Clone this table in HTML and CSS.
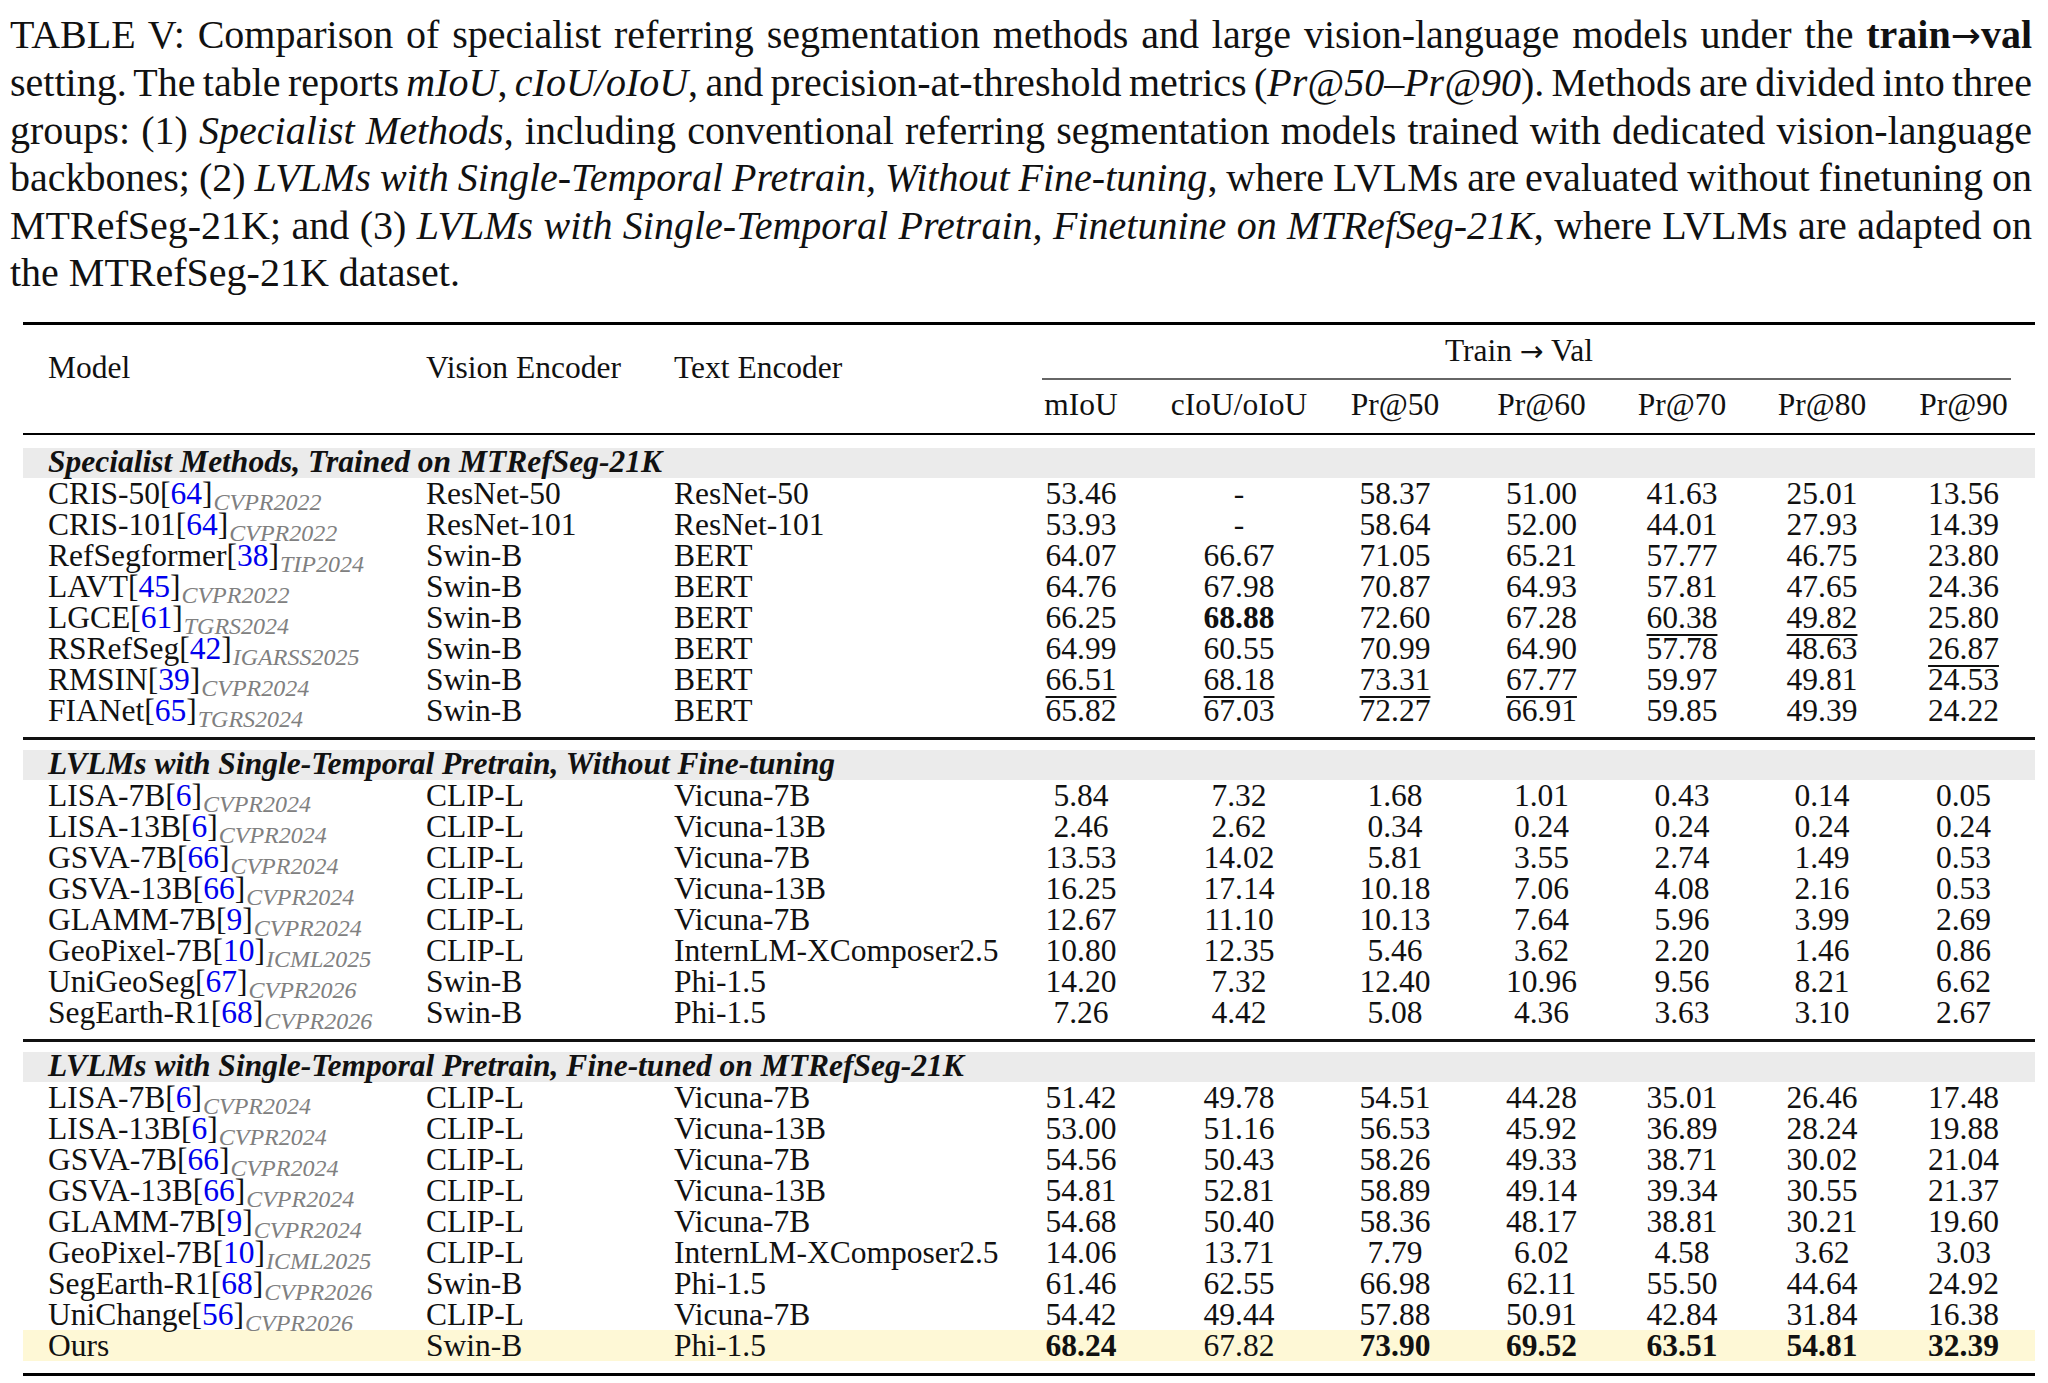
FILE: index.html
```html
<!DOCTYPE html>
<html lang="en">
<head>
  <meta charset="UTF-8">
  <title>Table V - Train to Val comparison</title>
  <link rel="stylesheet" href="styles.css">
</head>
<body>

  <!-- Caption -->
  <div class="caption">
    <span class="ln">TABLE V: Comparison of specialist referring segmentation methods and large vision-language models under the <b>train<span class="arr">&rarr;</span>val</b></span>
    <span class="ln">setting. The table reports <i>mIoU</i>, <i>cIoU/oIoU</i>, and precision-at-threshold metrics (<i>Pr@50&ndash;Pr@90</i>). Methods are divided into three</span>
    <span class="ln">groups: (1) <i>Specialist Methods</i>, including conventional referring segmentation models trained with dedicated vision-language</span>
    <span class="ln">backbones; (2) <i>LVLMs with Single-Temporal Pretrain, Without Fine-tuning</i>, where LVLMs are evaluated without finetuning on</span>
    <span class="ln">MTRefSeg-21K; and (3) <i>LVLMs with Single-Temporal Pretrain, Finetunine on MTRefSeg-21K</i>, where LVLMs are adapted on</span>
    <span class="ln last">the MTRefSeg-21K dataset.</span>
  </div>

  <div class="results">
    <div class="rule-top"></div>

    <!-- Header -->
    <div class="head">
      <div class="h-left">Model</div>
      <div class="h-left h-vis">Vision Encoder</div>
      <div class="h-left h-txt">Text Encoder</div>
      <div class="h-group">Train <span class="arr">&rarr;</span> Val</div>
      <div class="cmid"></div>
      <div class="h-met">mIoU</div>
      <div class="h-met">cIoU/oIoU</div>
      <div class="h-met">Pr@50</div>
      <div class="h-met">Pr@60</div>
      <div class="h-met">Pr@70</div>
      <div class="h-met">Pr@80</div>
      <div class="h-met">Pr@90</div>
    </div>
    <div class="rule-mid"></div>

    <!-- Group 1 -->
    <div class="band">Specialist Methods, Trained on MTRefSeg-21K</div>
    <div class="row"><div>CRIS-50[<span class="ref">64</span>]<span class="venue">CVPR2022</span></div><div>ResNet-50</div><div>ResNet-50</div><div>53.46</div><div>-</div><div>58.37</div><div>51.00</div><div>41.63</div><div>25.01</div><div>13.56</div></div>
    <div class="row"><div>CRIS-101[<span class="ref">64</span>]<span class="venue">CVPR2022</span></div><div>ResNet-101</div><div>ResNet-101</div><div>53.93</div><div>-</div><div>58.64</div><div>52.00</div><div>44.01</div><div>27.93</div><div>14.39</div></div>
    <div class="row"><div>RefSegformer[<span class="ref">38</span>]<span class="venue">TIP2024</span></div><div>Swin-B</div><div>BERT</div><div>64.07</div><div>66.67</div><div>71.05</div><div>65.21</div><div>57.77</div><div>46.75</div><div>23.80</div></div>
    <div class="row"><div>LAVT[<span class="ref">45</span>]<span class="venue">CVPR2022</span></div><div>Swin-B</div><div>BERT</div><div>64.76</div><div>67.98</div><div>70.87</div><div>64.93</div><div>57.81</div><div>47.65</div><div>24.36</div></div>
    <div class="row"><div>LGCE[<span class="ref">61</span>]<span class="venue">TGRS2024</span></div><div>Swin-B</div><div>BERT</div><div>66.25</div><div><b>68.88</b></div><div>72.60</div><div>67.28</div><div><u>60.38</u></div><div><u>49.82</u></div><div>25.80</div></div>
    <div class="row"><div>RSRefSeg[<span class="ref">42</span>]<span class="venue">IGARSS2025</span></div><div>Swin-B</div><div>BERT</div><div>64.99</div><div>60.55</div><div>70.99</div><div>64.90</div><div>57.78</div><div>48.63</div><div><u>26.87</u></div></div>
    <div class="row"><div>RMSIN[<span class="ref">39</span>]<span class="venue">CVPR2024</span></div><div>Swin-B</div><div>BERT</div><div><u>66.51</u></div><div><u>68.18</u></div><div><u>73.31</u></div><div><u>67.77</u></div><div>59.97</div><div>49.81</div><div>24.53</div></div>
    <div class="row"><div>FIANet[<span class="ref">65</span>]<span class="venue">TGRS2024</span></div><div>Swin-B</div><div>BERT</div><div>65.82</div><div>67.03</div><div>72.27</div><div>66.91</div><div>59.85</div><div>49.39</div><div>24.22</div></div>
    <div class="rule-group"></div>

    <!-- Group 2 -->
    <div class="band">LVLMs with Single-Temporal Pretrain, Without Fine-tuning</div>
    <div class="row"><div>LISA-7B[<span class="ref">6</span>]<span class="venue">CVPR2024</span></div><div>CLIP-L</div><div>Vicuna-7B</div><div>5.84</div><div>7.32</div><div>1.68</div><div>1.01</div><div>0.43</div><div>0.14</div><div>0.05</div></div>
    <div class="row"><div>LISA-13B[<span class="ref">6</span>]<span class="venue">CVPR2024</span></div><div>CLIP-L</div><div>Vicuna-13B</div><div>2.46</div><div>2.62</div><div>0.34</div><div>0.24</div><div>0.24</div><div>0.24</div><div>0.24</div></div>
    <div class="row"><div>GSVA-7B[<span class="ref">66</span>]<span class="venue">CVPR2024</span></div><div>CLIP-L</div><div>Vicuna-7B</div><div>13.53</div><div>14.02</div><div>5.81</div><div>3.55</div><div>2.74</div><div>1.49</div><div>0.53</div></div>
    <div class="row"><div>GSVA-13B[<span class="ref">66</span>]<span class="venue">CVPR2024</span></div><div>CLIP-L</div><div>Vicuna-13B</div><div>16.25</div><div>17.14</div><div>10.18</div><div>7.06</div><div>4.08</div><div>2.16</div><div>0.53</div></div>
    <div class="row"><div>GLAMM-7B[<span class="ref">9</span>]<span class="venue">CVPR2024</span></div><div>CLIP-L</div><div>Vicuna-7B</div><div>12.67</div><div>11.10</div><div>10.13</div><div>7.64</div><div>5.96</div><div>3.99</div><div>2.69</div></div>
    <div class="row"><div>GeoPixel-7B[<span class="ref">10</span>]<span class="venue">ICML2025</span></div><div>CLIP-L</div><div>InternLM-XComposer2.5</div><div>10.80</div><div>12.35</div><div>5.46</div><div>3.62</div><div>2.20</div><div>1.46</div><div>0.86</div></div>
    <div class="row"><div>UniGeoSeg[<span class="ref">67</span>]<span class="venue">CVPR2026</span></div><div>Swin-B</div><div>Phi-1.5</div><div>14.20</div><div>7.32</div><div>12.40</div><div>10.96</div><div>9.56</div><div>8.21</div><div>6.62</div></div>
    <div class="row"><div>SegEarth-R1[<span class="ref">68</span>]<span class="venue">CVPR2026</span></div><div>Swin-B</div><div>Phi-1.5</div><div>7.26</div><div>4.42</div><div>5.08</div><div>4.36</div><div>3.63</div><div>3.10</div><div>2.67</div></div>
    <div class="rule-group"></div>

    <!-- Group 3 -->
    <div class="band">LVLMs with Single-Temporal Pretrain, Fine-tuned on MTRefSeg-21K</div>
    <div class="row"><div>LISA-7B[<span class="ref">6</span>]<span class="venue">CVPR2024</span></div><div>CLIP-L</div><div>Vicuna-7B</div><div>51.42</div><div>49.78</div><div>54.51</div><div>44.28</div><div>35.01</div><div>26.46</div><div>17.48</div></div>
    <div class="row"><div>LISA-13B[<span class="ref">6</span>]<span class="venue">CVPR2024</span></div><div>CLIP-L</div><div>Vicuna-13B</div><div>53.00</div><div>51.16</div><div>56.53</div><div>45.92</div><div>36.89</div><div>28.24</div><div>19.88</div></div>
    <div class="row"><div>GSVA-7B[<span class="ref">66</span>]<span class="venue">CVPR2024</span></div><div>CLIP-L</div><div>Vicuna-7B</div><div>54.56</div><div>50.43</div><div>58.26</div><div>49.33</div><div>38.71</div><div>30.02</div><div>21.04</div></div>
    <div class="row"><div>GSVA-13B[<span class="ref">66</span>]<span class="venue">CVPR2024</span></div><div>CLIP-L</div><div>Vicuna-13B</div><div>54.81</div><div>52.81</div><div>58.89</div><div>49.14</div><div>39.34</div><div>30.55</div><div>21.37</div></div>
    <div class="row"><div>GLAMM-7B[<span class="ref">9</span>]<span class="venue">CVPR2024</span></div><div>CLIP-L</div><div>Vicuna-7B</div><div>54.68</div><div>50.40</div><div>58.36</div><div>48.17</div><div>38.81</div><div>30.21</div><div>19.60</div></div>
    <div class="row"><div>GeoPixel-7B[<span class="ref">10</span>]<span class="venue">ICML2025</span></div><div>CLIP-L</div><div>InternLM-XComposer2.5</div><div>14.06</div><div>13.71</div><div>7.79</div><div>6.02</div><div>4.58</div><div>3.62</div><div>3.03</div></div>
    <div class="row"><div>SegEarth-R1[<span class="ref">68</span>]<span class="venue">CVPR2026</span></div><div>Swin-B</div><div>Phi-1.5</div><div>61.46</div><div>62.55</div><div>66.98</div><div>62.11</div><div>55.50</div><div>44.64</div><div>24.92</div></div>
    <div class="row"><div>UniChange[<span class="ref">56</span>]<span class="venue">CVPR2026</span></div><div>CLIP-L</div><div>Vicuna-7B</div><div>54.42</div><div>49.44</div><div>57.88</div><div>50.91</div><div>42.84</div><div>31.84</div><div>16.38</div></div>
    <div class="row ours"><div>Ours</div><div>Swin-B</div><div>Phi-1.5</div><div><b>68.24</b></div><div>67.82</div><div><b>73.90</b></div><div><b>69.52</b></div><div><b>63.51</b></div><div><b>54.81</b></div><div><b>32.39</b></div></div>

    <div class="rule-bottom"></div>
  </div>

</body>
</html>
```

FILE: styles.css
```css
/* Base */
* {
  margin: 0;
  padding: 0;
  box-sizing: border-box;
}

body {
  background: #ffffff;
  color: #111;
  font-family: "Liberation Serif", "Times New Roman", serif;
}

.arr {
  font-family: "DejaVu Sans", sans-serif;
  font-weight: normal;
  font-size: 0.9em;
}

/* Caption */
.caption {
  width: 2040px;
  padding: 11px 8px 0 10px;
  font-size: 40px;
  line-height: 47.4px;
}

.caption .ln {
  display: block;
  white-space: nowrap;
  word-spacing: -3px;
  text-align: justify;
  text-align-last: justify;
}

.caption .ln.last {
  text-align-last: left;
  word-spacing: 0;
}

/* Results table */
.results {
  width: 2012px;
  margin: 26px 0 0 23px;
  font-size: 31.5px;
}

.rule-top,
.rule-bottom {
  height: 3px;
  background: #000;
}

.rule-bottom {
  margin-top: 12px;
}

.rule-mid {
  height: 2px;
  background: #000;
  margin-bottom: 13px;
}

.rule-group {
  height: 3px;
  background: #111;
  margin: 11px 0 10px;
}

/* Shared column widths */
.head,
.row {
  display: grid;
  grid-template-columns: 392px 247px 341px 156px 160px 152px 141px 140px 140px 143px;
}

/* Header */
.head {
  grid-template-rows: auto auto auto;
  line-height: 31px;
}

.h-left {
  grid-row: 1 / 4;
  padding: 27px 0 0 25px;
}

.h-vis,
.h-txt {
  padding-left: 11px;
}

.h-txt {
  padding-left: 12px;
}

.h-group {
  grid-column: 4 / 11;
  grid-row: 1;
  text-align: center;
  padding: 10px 0 11px;
}

.cmid {
  grid-column: 4 / 11;
  grid-row: 2;
  height: 2px;
  background: #666;
  margin: 0 24px 0 39px;
}

.h-met {
  grid-row: 3;
  text-align: center;
  padding: 9px 0 13px;
}

/* Group band */
.band {
  background: #ebebeb;
  height: 30px;
  line-height: 28px;
  padding-left: 25px;
  font-weight: bold;
  font-style: italic;
}

/* Data rows */
.row {
  line-height: 31px;
  height: 31px;
  white-space: nowrap;
}

.row > div:nth-child(1) {
  padding-left: 25px;
}

.row > div:nth-child(2) {
  padding-left: 11px;
}

.row > div:nth-child(3) {
  padding-left: 12px;
}

.row > div:nth-child(n+4) {
  text-align: center;
}

.ref {
  color: #0000ee;
}

.venue {
  font-size: 24px;
  font-style: italic;
  color: #808080;
  line-height: 0;
  vertical-align: -6px;
  margin-left: 1px;
}

.row u {
  text-decoration-thickness: 2px;
  text-underline-offset: 6px;
  text-decoration-skip-ink: none;
}

.row.ours {
  background: #fef8d6;
}
```
